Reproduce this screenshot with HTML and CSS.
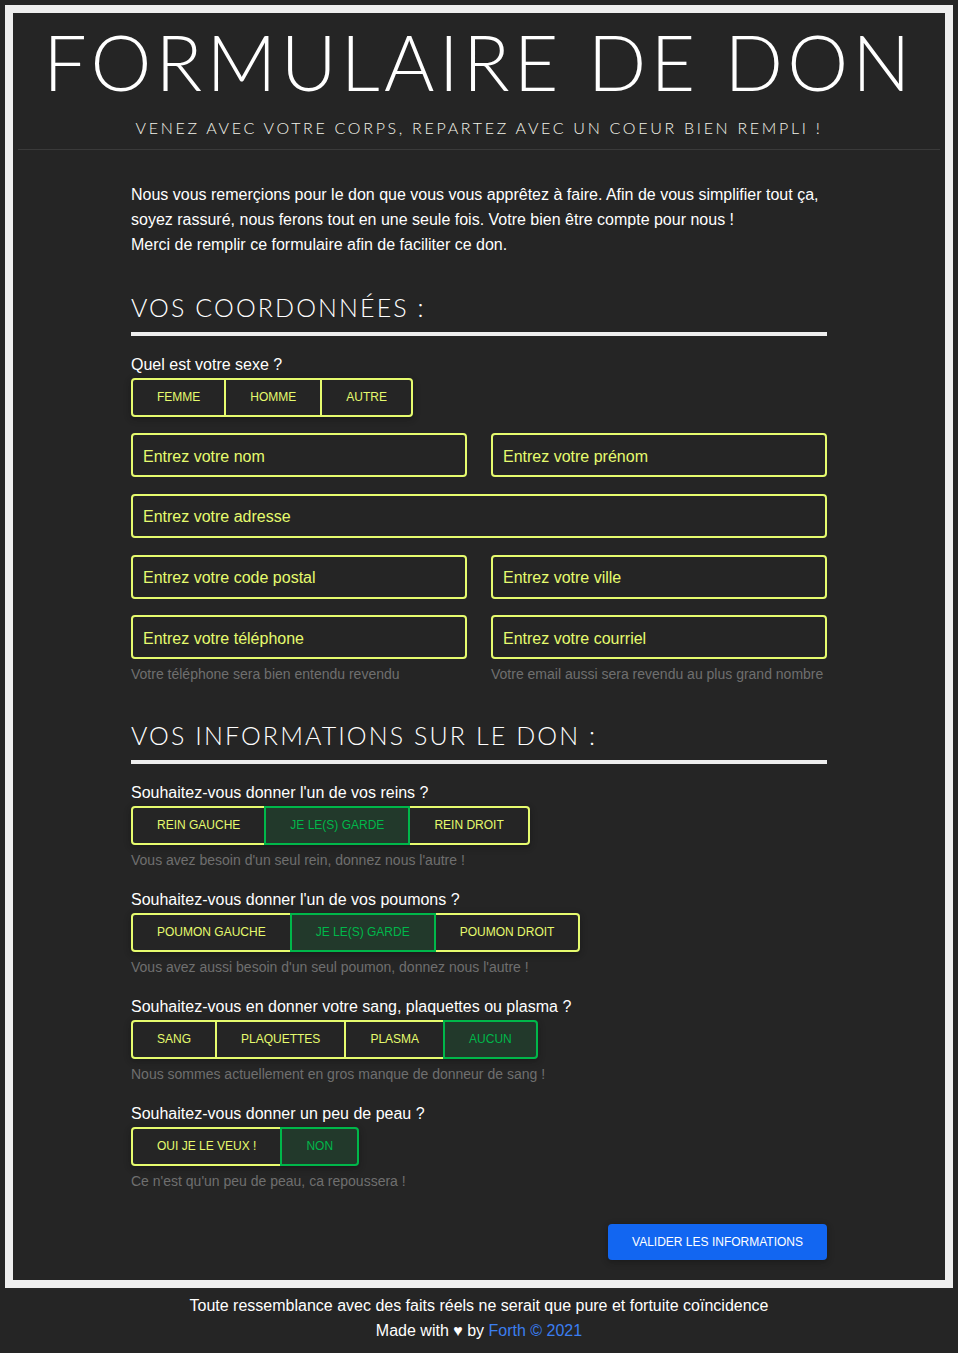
FILE: index.html
```html
<!DOCTYPE html>
<html lang="fr">
<head>
<meta charset="utf-8">
<title>Formulaire de don</title>
<link rel="stylesheet" href="styles.css">
</head>
<body>
<div class="frame">
  <header class="hero">
    <h1 class="hero-title">FORMULAIRE DE DON</h1>
    <p class="hero-tagline">VENEZ AVEC VOTRE CORPS, REPARTEZ AVEC UN COEUR BIEN REMPLI !</p>
  </header>
  <main class="content">
    <p class="intro">Nous vous remerçions pour le don que vous vous apprêtez à faire. Afin de vous simplifier tout ça,<br>soyez rassuré, nous ferons tout en une seule fois. Votre bien être compte pour nous !<br>Merci de remplir ce formulaire afin de faciliter ce don.</p>

    <h2 class="section-title">VOS COORDONNÉES :</h2>
    <div class="question first">
      <div class="question-label">Quel est votre sexe ?</div>
      <div class="btn-group">
        <button type="button" class="opt">Femme</button>
        <button type="button" class="opt">Homme</button>
        <button type="button" class="opt">Autre</button>
      </div>
    </div>

    <div class="fields">
      <input class="field" type="text" placeholder="Entrez votre nom">
      <input class="field" type="text" placeholder="Entrez votre prénom">
      <input class="field wide" type="text" placeholder="Entrez votre adresse">
      <input class="field" type="text" placeholder="Entrez votre code postal">
      <input class="field" type="text" placeholder="Entrez votre ville">
      <div class="cell">
        <input class="field" type="tel" placeholder="Entrez votre téléphone">
        <div class="help">Votre téléphone sera bien entendu revendu</div>
      </div>
      <div class="cell">
        <input class="field" type="email" placeholder="Entrez votre courriel">
        <div class="help">Votre email aussi sera revendu au plus grand nombre</div>
      </div>
    </div>

    <h2 class="section-title">VOS INFORMATIONS SUR LE DON :</h2>

    <div class="question first">
      <div class="question-label">Souhaitez-vous donner l'un de vos reins ?</div>
      <div class="btn-group">
        <button type="button" class="opt">Rein gauche</button>
        <button type="button" class="opt active">Je le(s) garde</button>
        <button type="button" class="opt">Rein droit</button>
      </div>
      <div class="help">Vous avez besoin d'un seul rein, donnez nous l'autre !</div>
    </div>

    <div class="question">
      <div class="question-label">Souhaitez-vous donner l'un de vos poumons ?</div>
      <div class="btn-group">
        <button type="button" class="opt">Poumon gauche</button>
        <button type="button" class="opt active">Je le(s) garde</button>
        <button type="button" class="opt">Poumon droit</button>
      </div>
      <div class="help">Vous avez aussi besoin d'un seul poumon, donnez nous l'autre !</div>
    </div>

    <div class="question">
      <div class="question-label">Souhaitez-vous en donner votre sang, plaquettes ou plasma ?</div>
      <div class="btn-group">
        <button type="button" class="opt">Sang</button>
        <button type="button" class="opt">Plaquettes</button>
        <button type="button" class="opt">Plasma</button>
        <button type="button" class="opt active">Aucun</button>
      </div>
      <div class="help">Nous sommes actuellement en gros manque de donneur de sang !</div>
    </div>

    <div class="question">
      <div class="question-label">Souhaitez-vous donner un peu de peau ?</div>
      <div class="btn-group">
        <button type="button" class="opt">Oui je le veux !</button>
        <button type="button" class="opt active">Non</button>
      </div>
      <div class="help">Ce n'est qu'un peu de peau, ca repoussera !</div>
    </div>

    <div class="actions">
      <button type="submit" class="submit">Valider les informations</button>
    </div>
  </main>
</div>
<footer class="site-footer">
  <p>Toute ressemblance avec des faits réels ne serait que pure et fortuite coïncidence</p>
  <p>Made with ♥ by <a class="credit" href="#">Forth © 2021</a></p>
</footer>
</body>
</html>
```

FILE: styles.css
```css
* { box-sizing: border-box; }

html, body {
  margin: 0;
  background: #252525;
}

body {
  font-family: "Liberation Sans", Arial, sans-serif;
  font-size: 16px;
  color: #ffffff;
}

.frame {
  margin: 5px 5px 0;
  border: 8px solid #eeeeee;
  padding-bottom: 20px;
}

.hero {
  margin: 0 5px;
  padding: 10px 0 11px;
  border-bottom: 1px solid #3a3a3a;
  text-align: center;
}

.hero-title {
  margin: 0;
  font-family: Lato, "Open Sans", sans-serif;
  font-weight: 300;
  font-size: 77px;
  line-height: 76px;
  letter-spacing: 4.2px;
  color: #ffffff;
}

.hero-tagline {
  margin: 19px 0 0;
  font-family: Lato, "Open Sans", sans-serif;
  font-weight: 300;
  font-size: 16px;
  line-height: 20px;
  letter-spacing: 2.7px;
  color: #f4f4ea;
}

.content {
  width: 696px;
  margin: 0 auto;
  padding-top: 32px;
}

.intro {
  margin: 0;
  line-height: 25px;
}

.section-title {
  margin: 35px 0 0;
  padding-bottom: 10.2px;
  border-bottom: 4px solid #eeeeee;
  font-family: Lato, "Open Sans", sans-serif;
  font-weight: 300;
  font-size: 25px;
  line-height: 30px;
  letter-spacing: 2.1px;
  color: #ffffff;
}

.question { margin-top: 17px; }
.question.first { margin-top: 16.5px; }

.question-label {
  line-height: 24px;
  margin-bottom: 1px;
}

.btn-group {
  display: inline-flex;
  border-radius: 4px;
  box-shadow: 0 2px 5px 0 rgba(0, 0, 0, 0.2), 0 2px 10px 0 rgba(0, 0, 0, 0.1);
}

.opt {
  height: 39px;
  padding: 0 24px;
  margin: 0;
  border: 2px solid #e6fb6e;
  background: transparent;
  color: #e6fb6e;
  font-family: "Liberation Sans", Arial, sans-serif;
  font-size: 12px;
  text-transform: uppercase;
  border-radius: 0;
  cursor: pointer;
}

.opt + .opt { margin-left: -2px; }
.opt:first-child { border-radius: 4px 0 0 4px; }
.opt:last-child { border-radius: 0 4px 4px 0; }

.opt.active {
  position: relative;
  z-index: 1;
  border-color: #00b74a;
  background: #22392b;
  color: #00b74a;
}

.fields {
  display: grid;
  grid-template-columns: 1fr 1fr;
  column-gap: 24px;
  row-gap: 16.67px;
  margin-top: 16.5px;
}

.field {
  display: block;
  width: 100%;
  height: 44px;
  padding: 3px 10px 0;
  border: 2px solid #e6fb6e;
  border-radius: 4px;
  background: transparent;
  color: #e6fb6e;
  font-family: "Liberation Sans", Arial, sans-serif;
  font-size: 16px;
  outline: none;
}

.field::placeholder { color: #e6fb6e; opacity: 1; }

.field.wide { grid-column: 1 / 3; }

.help {
  margin-top: 5px;
  font-size: 14px;
  line-height: 21px;
  color: #6f6f6f;
}

.actions {
  display: flex;
  justify-content: flex-end;
  margin-top: 32.5px;
}

.submit {
  height: 36px;
  padding: 0 24px;
  border: 0;
  border-radius: 4px;
  background: #1266f1;
  color: #ffffff;
  font-family: "Liberation Sans", Arial, sans-serif;
  font-size: 12px;
  text-transform: uppercase;
  box-shadow: 0 2px 5px 0 rgba(0, 0, 0, 0.2), 0 2px 10px 0 rgba(0, 0, 0, 0.1);
  cursor: pointer;
}

.site-footer {
  padding-top: 4.5px;
  text-align: center;
}

.site-footer p {
  margin: 0;
  line-height: 25px;
}

.credit {
  color: #3b7ef0;
  text-decoration: none;
}
```
